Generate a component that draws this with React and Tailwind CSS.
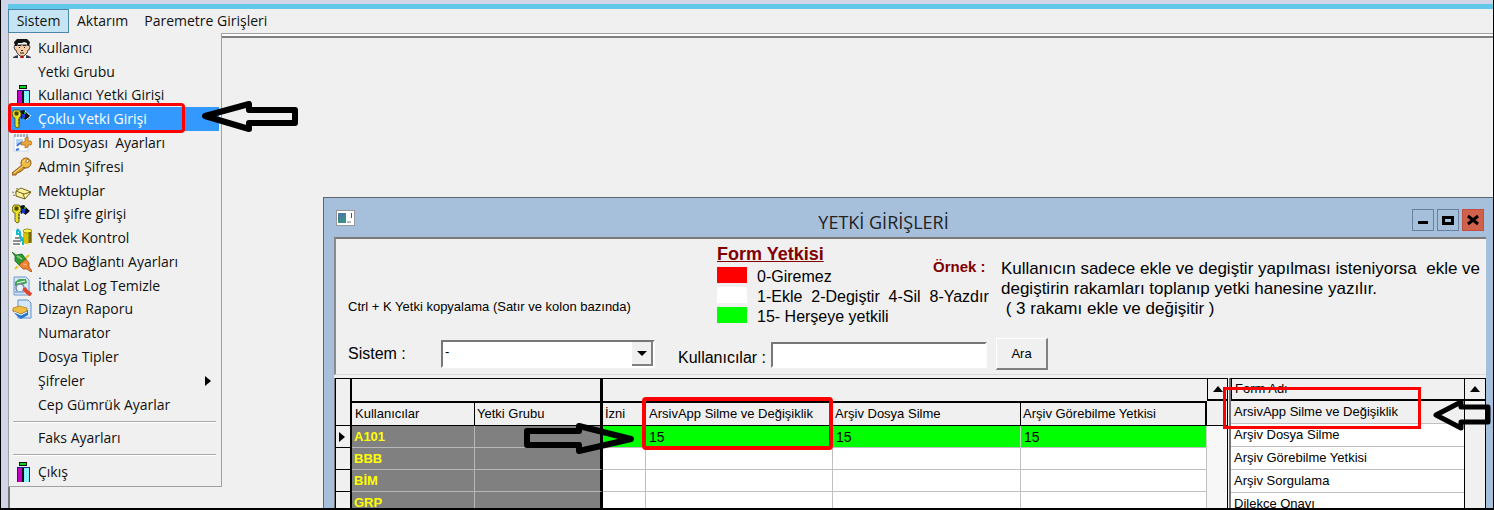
import React from "react";

const sans = "font-['Open_Sans','Noto_Sans',sans-serif]";

function Face() {
  return (
    <svg viewBox="0 0 20 20" className="size-5">
      <path d="M1 20c0-2 3-2 5-3h8c2 1 5 1 5 3z" fill="#34384e" />
      <path d="M6 16l4 3 4-3v4H6z" fill="#fff" />
      <path d="M9 17h2l1 3H8z" fill="#d01010" />
      <path d="M3 7h14l1 2-1 3h-1l-1 3-3 3H8l-3-3-1-3H3L2 9z" fill="#f7cda6" stroke="#222" strokeWidth=".8" />
      <path d="M3 8L2 4l3-3h10l3 3-1 4-2-1V5L12 4 10 5H6L5 8z" fill="#111" />
      <path d="M6 7.500h3M11 7.500h3M7 9.500h1M12 9.500h1M9 12.500h2M8 15h4" stroke="#222" />
    </svg>
  );
}

function Door() {
  return (
    <svg viewBox="0 0 20 20" className="size-5" shapeRendering="crispEdges">
      <rect x="7" y="0" width="8" height="4" fill="#111" />
      <rect x="8" y="1" width="6" height="2" fill="#00d81c" />
      <rect x="5" y="5" width="13" height="15" fill="#1b1b8c" />
      <rect x="6" y="6" width="4" height="14" fill="#c400c4" />
      <rect x="10" y="6" width="2" height="14" fill="#111" />
      <rect x="12" y="6" width="5" height="14" fill="#7fefff" />
      <path d="M13 7v13M15 6v14" stroke="#fff" strokeDasharray="1 1" />
    </svg>
  );
}

function KeyTag() {
  return (
    <svg viewBox="0 0 20 20" className="size-5">
      <path d="M7 2l5-1 6 6-4 4-3-2-2 1z" fill="#111" />
      <path d="M13 2l6 5-5 4" fill="none" stroke="#fff" strokeDasharray="2 1" />
      <rect x="10" y="5" width="3" height="4" fill="#1838d8" />
      <rect x="12" y="3" width="2" height="2" fill="#1c9a2c" />
      <path d="M0 4l2-3h5l2 3v3L7 9v9l-2 1-2-2V9L1 8z" fill="#e8e020" stroke="#4b4800" strokeWidth=".8" />
      <path d="M3 3h3v3H3zM6 11h2M6 14h2" fill="#4b4800" stroke="#4b4800" />
    </svg>
  );
}

function IniFile() {
  return (
    <svg viewBox="0 0 20 20" className="size-5">
      <rect x="2" y="3" width="14" height="15" fill="#fff" stroke="#c3d9f2" />
      <path d="M3 1v3M6 1v3M9 1v3M12 1v3M15 1v3" stroke="#778" />
      <rect x="4" y="6" width="7" height="5" fill="#b7d3f4" />
      <path d="M4 17l3-1M5 13c1-2 3-3 6-3" stroke="#3b78d0" strokeWidth="2" fill="none" />
      <path d="M9 9h4V5l3-1v4h3l1 2-1 2h-3v2l-3 1v-3H9z" fill="#eda63a" stroke="#a8661a" strokeWidth=".7" />
    </svg>
  );
}

function GoldKey() {
  return (
    <svg viewBox="0 0 20 20" className="size-5">
      <path d="M10 8L0 16v2h4l1-2 3-1 5-4z" fill="#d99a26" stroke="#80500f" strokeWidth=".9" />
      <circle cx="14" cy="6" r="5" fill="#f3bd45" stroke="#8a5a14" />
      <circle cx="15.500" cy="4" r="1.500" fill="#fff" stroke="#8a5a14" strokeWidth=".8" />
      <path d="M2 16l9-7M11 5l2-2" stroke="#ffe28f" />
    </svg>
  );
}

function Envelope() {
  return (
    <svg viewBox="0 0 20 20" className="size-5">
      <path d="M4 10l5-3 10 4-6 7-9-3z" fill="#fff29a" stroke="#6f6420" />
      <path d="M4 10l8 3 7-2M11 13l2 5" stroke="#6f6420" fill="none" />
      <path d="M0 11l4 1M1 14l4 1M4 8l3-1" stroke="#8c8136" strokeDasharray="2 1" />
    </svg>
  );
}

function Backup() {
  return (
    <svg viewBox="0 0 20 20" className="size-5">
      <rect x="0" y="3" width="11" height="15" fill="#fff" />
      <path d="M3 10h6M1 13h8M1 16h7" stroke="#222" />
      <path d="M11 3v12l4 1 5-2V2z" fill="#d8c300" />
      <ellipse cx="15.500" cy="3" rx="4.500" ry="2" fill="#fff04a" stroke="#776b00" strokeWidth=".7" />
      <path d="M18 4v11" stroke="#766b00" strokeWidth="3" />
      <path d="M5 1l3 3v4l3 3v6M5 2v4h3M8 12h3" stroke="#16b9cf" strokeWidth="2" fill="none" />
    </svg>
  );
}

function Plug() {
  return (
    <svg viewBox="0 0 20 20" className="size-5">
      <path d="M14 6l3-3M3 17l3-3" stroke="#e7c624" strokeWidth="2" />
      <path d="M0 0l4 3 6-1 4 5-7 6-4-4V4z" fill="#2f9a35" stroke="#17631e" strokeWidth=".8" />
      <path d="M7 13l7-6 3 4v4l3 4-1 1-4-3H11z" fill="#ee8434" stroke="#a94a10" strokeWidth=".8" />
      <path d="M5 4l5 3" stroke="#8bd67c" strokeWidth="1.500" />
      <path d="M11 12l4 1" stroke="#ffc08a" />
    </svg>
  );
}

function LogClean() {
  return (
    <svg viewBox="0 0 20 20" className="size-5">
      <path d="M2 1h12l3 3v15H2z" fill="#d7e8fa" stroke="#6f98cd" />
      <path d="M3 6l4-3h7l1 4-7 3H3z" fill="#43a653" />
      <path d="M5 7l8-2" stroke="#fff" />
      <circle cx="8" cy="12" r="4" fill="#e8f1fb" stroke="#77879c" strokeWidth="1.500" />
      <path d="M3 16h9" stroke="#8fb4e4" strokeWidth="2" />
      <path d="M12 12l2 3 5 4" stroke="#e0442c" strokeWidth="4" fill="none" />
    </svg>
  );
}

function Report() {
  return (
    <svg viewBox="0 0 20 20" className="size-5">
      <path d="M6 1h10l3 3v15H6z" fill="#d6e7fa" stroke="#5e8fcb" />
      <path d="M0 11l4 5 5 4 7-4v-5l-6 2z" fill="#2875cc" />
      <path d="M1 9l6-2 8 2v3l-6 3-8-3z" fill="#f0bd42" stroke="#a97718" strokeWidth=".7" />
      <path d="M2 13l7 3 6-3" stroke="#fff" fill="none" />
    </svg>
  );
}

const menuItems = [
  { text: "Kullanıcı", icon: Face },
  { text: "Yetki Grubu" },
  { text: "Kullanıcı Yetki Girişi", icon: Door },
  { text: "Çoklu Yetki Girişi", icon: KeyTag, active: true },
  { text: "Ini Dosyası  Ayarları", icon: IniFile },
  { text: "Admin Şifresi", icon: GoldKey },
  { text: "Mektuplar", icon: Envelope },
  { text: "EDI şifre girişi", icon: KeyTag },
  { text: "Yedek Kontrol", icon: Backup },
  { text: "ADO Bağlantı Ayarları", icon: Plug },
  { text: "İthalat Log Temizle", icon: LogClean },
  { text: "Dizayn Raporu", icon: Report },
  { text: "Numarator" },
  { text: "Dosya Tipler" },
  { text: "Şifreler", sub: true },
  { text: "Cep Gümrük Ayarlar" },
  { separator: true },
  { text: "Faks Ayarları" },
  { separator: true },
  { text: "Çıkış", icon: Door },
];

function ArrowLeft({ className }) {
  return (
    <svg viewBox="0 0 98 31" className={className} fill="none">
      <path d="M4 15L48 3V9H94V22H48V28Z" stroke="#000" strokeWidth="6" strokeLinejoin="round" />
    </svg>
  );
}

function SystemMenu() {
  return (
    <div role="menu" className="absolute left-0 top-full z-20 flex h-[454px] w-[214px] flex-col border border-t-0 border-[#a0a0a0] bg-[#f0f0f0] pb-0.5 pl-px pr-0.5 pt-[3px]">
      {menuItems.map((item, i) =>
        item.separator ? (
          <div key={i} role="separator" className="mx-[3px] my-1 h-0.5 shrink-0 border-b border-t border-b-white border-t-[#a9a9a9]" />
        ) : (
          <button
            key={i}
            type="button"
            role="menuitem"
            className={
              item.active
                ? "relative flex w-full flex-1 items-center bg-[#3399ff] pl-0.5 text-left text-white"
                : "relative flex w-full flex-1 items-center pl-0.5 text-left"
            }
          >
            <span className="flex w-[26px] shrink-0">{item.icon && <item.icon />}</span>
            <span className="whitespace-pre">{item.text}</span>
            {item.sub && (
              <svg viewBox="0 0 6 10" className="ml-auto mr-2 h-2.5 w-1.5">
                <path d="M0 0L6 5L0 10Z" />
              </svg>
            )}
            {item.active && (
              <>
                <span className="absolute -left-0.5 -top-1 h-[30px] w-[177px] rounded-sm border-3 border-[#ff0000]" />
                <ArrowLeft className="absolute left-[191px] top-[-6px] z-10 h-[31px] w-[98px] max-w-none" />
              </>
            )}
          </button>
        )
      )}
    </div>
  );
}

function MenuBar() {
  return (
    <nav className="flex h-6 shrink-0 bg-[#f0f0f0]">
      <div className="relative h-6">
        <button type="button" className="h-6 w-[61px] border border-[#4d85a6] bg-[#c5e5f5]">Sistem</button>
        <SystemMenu />
      </div>
      <button type="button" className="px-2">Aktarım</button>
      <button type="button" className="px-2">Paremetre Girişleri</button>
    </nav>
  );
}

function TitleBar() {
  return (
    <header className="flex h-[39px] shrink-0 items-center">
      <div className="flex w-[100px] pl-[12px]">
        <svg viewBox="0 0 19 16" className="h-4 w-[19px]">
          <rect x=".5" y=".5" width="18" height="15" fill="#fff" stroke="#999" />
          <rect x="2" y="3" width="8" height="10" fill="#3f8a8c" />
          <path d="M2 3h8L2 10z" fill="#4b79a8" />
          <rect x="11" y="11" width="4" height="2" fill="#bbb" />
          <rect x="15" y="3" width="1" height="5" fill="#245c9c" />
        </svg>
      </div>
      <h1 className={`flex-1 pt-2 text-center text-[18px] leading-6 text-[#222] ${sans}`}>YETKİ GİRİŞLERİ</h1>
      <div className="flex w-[150px] justify-end gap-[3px] pr-[9px] pt-1">
        <button type="button" aria-label="Simge durumuna küçült" className="flex size-[22px] items-center justify-center border border-[#6a7fa0]">
          <svg viewBox="0 0 12 12" className="size-3"><rect x="1" y="7" width="10" height="3" /></svg>
        </button>
        <button type="button" aria-label="Ekranı kapla" className="flex size-[22px] items-center justify-center border border-[#6a7fa0]">
          <svg viewBox="0 0 12 12" className="size-3"><path d="M0 2h12v9H0zM3 5v3h6V5z" fillRule="evenodd" /></svg>
        </button>
        <button type="button" aria-label="Kapat" className="flex size-[22px] items-center justify-center border border-[#c05040] bg-[#d0614c]">
          <svg viewBox="0 0 12 12" className="size-3"><path d="M1 2L11 10M11 2L1 10" stroke="#000" strokeWidth="3" /></svg>
        </button>
      </div>
    </header>
  );
}

const legend = [
  { text: "0-Giremez", color: "bg-[#ff0000]" },
  { text: "1-Ekle  2-Degiştir  4-Sil  8-Yazdır", color: "bg-white" },
  { text: "15- Herşeye yetkili", color: "bg-[#00ff00]" },
];

function FilterPanel() {
  return (
    <form className="h-[138px] shrink-0 border-b border-l-2 border-t-2 border-b-[#dcdcdc] border-l-[#8a8a8a] border-t-[#7a7a7a] text-[16px]" onSubmit={(e) => e.preventDefault()}>
      <div className="flex h-[99px]">
        <p className="w-[381px] shrink-0 pl-3 pt-[58px] text-[13px] leading-5">Ctrl + K Yetki kopyalama (Satır ve kolon bazında)</p>
        <div className="w-[216px] shrink-0 pt-1">
          <h2 className="text-[18px] font-bold leading-[22px] text-[#800000] underline">Form Yetkisi</h2>
          {legend.map((l) => (
            <div key={l.text} className="flex h-5 items-center gap-[10px]">
              <span className={`h-4 w-[30px] shrink-0 ${l.color}`} />
              <span className="whitespace-pre pt-1">{l.text}</span>
            </div>
          ))}
        </div>
        <h2 className="w-[68px] shrink-0 pt-[18px] text-[15px] font-bold leading-5 text-[#800000]">Örnek :</h2>
        <p className="whitespace-pre pt-5 text-[17px] leading-5">{"Kullanıcın sadece ekle ve degiştir yapılması isteniyorsa  ekle ve\ndegiştirin rakamları toplanıp yetki hanesine yazılır.\n ( 3 rakamı ekle ve değişitir )"}</p>
      </div>
      <div className="flex h-8 pl-3">
        <label htmlFor="sistem" className="w-[93px] shrink-0 pt-1.5 leading-5">Sistem :</label>
        <div className="relative mt-0.5 h-[28px] w-[214px] shrink-0">
          <select id="sistem" defaultValue="-" className="size-full appearance-none border-2 border-b-white border-l-[#777] border-r-white border-t-[#777] bg-white px-0.5 pb-1 text-[13px]">
            <option>-</option>
          </select>
          <span className="pointer-events-none absolute bottom-0.5 right-0.5 top-0.5 flex w-[21px] items-center justify-center border-b-2 border-r-2 border-[#808080] bg-[#f0f0f0]">
            <svg viewBox="0 0 10 5" className="h-[5px] w-2.5"><path d="M0 0H10L5 5Z" /></svg>
          </span>
        </div>
        <label htmlFor="kullanicilar" className="ml-[23px] w-[93px] shrink-0 pt-[10px] leading-5">Kullanıcılar :</label>
        <input id="kullanicilar" type="text" className="mt-1 h-[26px] w-[216px] shrink-0 border-2 border-b-white border-l-[#777] border-r-white border-t-[#777] bg-white px-1" />
        <button type="submit" className="ml-[9px] h-8 w-[52px] border-b-2 border-l border-r-2 border-t border-b-[#808080] border-l-white border-r-[#808080] border-t-white text-[13px]">Ara</button>
      </div>
    </form>
  );
}

const users = [
  { name: "A101", value: "15" },
  { name: "BBB", value: "" },
  { name: "BİM", value: "" },
  { name: "GRP", value: "" },
];
const forms = ["Arşiv Dosya Silme", "Arşiv Görebilme Yetkisi", "Arşiv Sorgulama", "Dilekçe Onayı"];

function UpArrow() {
  return (
    <svg viewBox="0 0 10 6" className="h-1.5 w-2.5"><path d="M5 0L10 6H0Z" /></svg>
  );
}

function PermissionGrid() {
  return (
    <div className="relative flex min-w-0 flex-1 border-l border-t border-black">
      <table className="w-full table-fixed border-separate border-spacing-0 self-start text-left text-[13px] leading-5">
        <colgroup>
          <col className="w-4" />
          <col className="w-[123px]" />
          <col className="w-[128px]" />
          <col className="w-[43px]" />
          <col className="w-[187px]" />
          <col className="w-[188px]" />
          <col />
        </colgroup>
        <thead>
          <tr className="h-6">
            <td rowSpan={2} className="border-b border-r-2 border-black p-0" />
            <td colSpan={2} className="border-b-2 border-r-3 border-black p-0" />
            <td colSpan={4} className="border-b-2 border-black p-0" />
          </tr>
          <tr className="h-[23px]">
            <th className="border-b border-r border-black p-0 pl-[3px] font-normal">Kullanıcılar</th>
            <th className="border-b border-r-3 border-black p-0 pl-0.5 font-normal">Yetki Grubu</th>
            <th className="border-b border-r border-black p-0 pl-0.5 font-normal">İzni</th>
            <th className="relative whitespace-nowrap border-b border-r border-black p-0 pl-[3px] font-normal">
              ArsivApp Silme ve Değişiklik
              <span className="pointer-events-none absolute -left-1 -top-1.5 z-10 h-[53px] w-[191px] rounded-sm border-4 border-[#ff0000]" />
            </th>
            <th className="border-b border-r border-black p-0 pl-0.5 font-normal">Arşiv Dosya Silme</th>
            <th className="border-b border-r-2 border-black p-0 pl-0.5 font-normal">Arşiv Görebilme Yetkisi</th>
          </tr>
        </thead>
        <tbody>
          {users.map((u, i) => (
            <tr key={u.name} className="h-[22px]">
              <td className="border-b border-r-2 border-black p-0 pl-[3px]">
                {i === 0 && <svg viewBox="0 0 6 10" className="h-2.5 w-1.5"><path d="M0 0L6 5L0 10Z" /></svg>}
              </td>
              <td className="border-b border-r border-[#b8b8b8] bg-[#808080] p-0 pl-0.5 font-bold text-[#ffff00]">{u.name}</td>
              <td className="relative border-b border-r-3 border-b-[#b8b8b8] border-r-black bg-[#808080] p-0">
                {i === 0 && (
                  <svg viewBox="0 0 112 31" className="absolute left-12 top-[-3px] z-10 h-[31px] w-28 max-w-none" fill="none">
                    <path d="M4 8H56V3L108 16L56 28V22H4Z" stroke="#000" strokeWidth="6" strokeLinejoin="round" />
                  </svg>
                )}
              </td>
              <td className={u.value ? "border-b border-[#c0c0c0] bg-[#00ff00] p-0" : "border-b border-r border-[#c0c0c0] bg-white p-0"} />
              {[0, 1, 2].map((n) => (
                <td key={n} className={u.value ? "border-b border-r border-b-[#c0c0c0] border-r-[#c0d8c0] bg-[#00ff00] p-0 pl-[3px] text-[14px]" : "border-b border-r border-[#c0c0c0] bg-white p-0"}>{u.value}</td>
              ))}
            </tr>
          ))}
        </tbody>
      </table>
      <div className="flex w-[21px] shrink-0 flex-col border-r border-black bg-[#f7f7f7]">
        <button type="button" aria-label="Yukarı" className="flex h-[22px] items-center justify-center border-b-2 border-l border-black bg-[#f0f0f0]"><UpArrow /></button>
        <span className="h-[25px] border-b border-black bg-[#f0f0f0]" />
      </div>
    </div>
  );
}

function FormList() {
  return (
    <div className="relative ml-px flex w-[257px] shrink-0 border-l-2 border-t border-l-[#777] border-t-black">
      <table className="w-full table-fixed border-separate border-spacing-0 self-start text-left text-[13px] leading-5">
        <thead>
          <tr className="h-[22px]">
            <th className="border-b-2 border-l border-black p-0 pl-[3px] font-normal">Form Adı</th>
          </tr>
        </thead>
        <tbody>
          <tr className="h-[23px]">
            <td className="border-b border-[#c0c0c0] p-0 pl-[3px]">ArsivApp Silme ve Değişiklik</td>
          </tr>
          {forms.map((f) => (
            <tr key={f} className="h-[23px]">
              <td className="border-b border-[#c0c0c0] bg-white p-0 pl-[3px]">{f}</td>
            </tr>
          ))}
        </tbody>
      </table>
      <div className="w-[22px] shrink-0 border-x border-black">
        <button type="button" aria-label="Yukarı" className="flex h-[22px] w-full items-center justify-center border-b-2 border-black"><UpArrow /></button>
      </div>
      <span className="pointer-events-none absolute left-[-8px] top-2 z-10 h-[42px] w-[198px] border-3 border-[#ff0000]" />
      <svg viewBox="0 0 60 34" className="pointer-events-none absolute left-[201px] top-[19px] z-10 h-[34px] w-[60px]" fill="none">
        <path d="M4 17L29 4V9H56V24H29V30Z" stroke="#000" strokeWidth="5" strokeLinejoin="round" />
      </svg>
    </div>
  );
}

function PermissionWindow() {
  return (
    <section className="absolute bottom-0 left-[313px] right-0 top-[159px] flex flex-col overflow-hidden border-l border-t border-[#5f6671] bg-[#a6bfdb] font-['Liberation_Sans',Arial,sans-serif] text-black">
      <TitleBar />
      <div className="ml-[10px] mr-[7px] flex min-h-0 flex-1 flex-col bg-[#f0f0f0]">
        <FilterPanel />
        <div className="mt-[3px] flex min-h-0 flex-1 border-l border-[#777]">
          <PermissionGrid />
          <FormList />
        </div>
      </div>
    </section>
  );
}

export default function App() {
  return (
    <div className={`flex h-screen flex-col overflow-hidden border-b-2 border-l border-r border-black bg-[#d0d6e8] pl-[7px] text-[14px] leading-4 text-[#111] ${sans}`}>
      <div className="mt-1 h-[5px] shrink-0 bg-[#62c8ea]" />
      <MenuBar />
      <div className="h-[5px] shrink-0 border-b-2 border-t border-b-[#808080] border-t-[#a0a0a0] bg-white" />
      <main className="relative min-h-0 flex-1 border-l-2 border-[#777] bg-[#f0f0f0]">
        <PermissionWindow />
      </main>
    </div>
  );
}
